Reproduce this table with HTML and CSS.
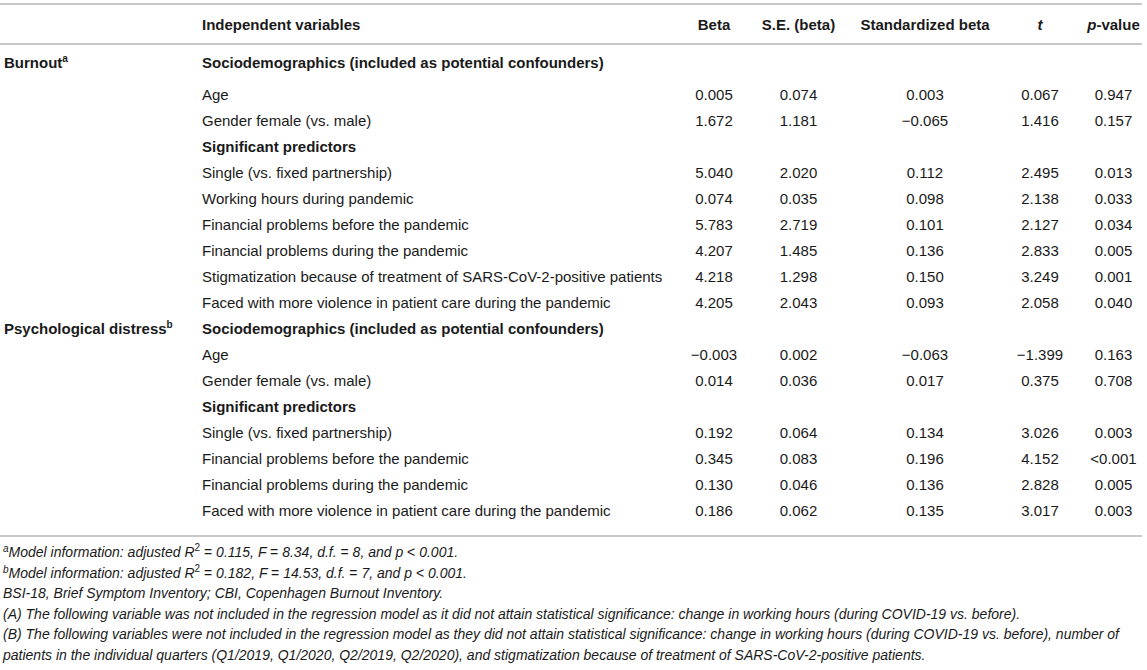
FILE: index.html
```html
<!DOCTYPE html>
<html lang="en">
<head>
<meta charset="utf-8">
<title>Regression table</title>
<link rel="stylesheet" href="styles.css">
</head>
<body>
<div class="page">
<table class="reg">
  <colgroup>
    <col class="c-out"><col class="c-var"><col class="c-beta"><col class="c-se"><col class="c-std"><col class="c-t"><col class="c-p">
  </colgroup>
  <thead>
    <tr>
      <th class="lft"></th>
      <th class="lft">Independent variables</th>
      <th>Beta</th>
      <th>S.E. (beta)</th>
      <th>Standardized beta</th>
      <th><i>t</i></th>
      <th><i>p</i>-value</th>
    </tr>
  </thead>
  <tbody>
    <tr class="first">
      <td class="lft outcome">Burnout<sup>a</sup></td>
      <td class="lft grp">Sociodemographics (included as potential confounders)</td>
      <td></td><td></td><td></td><td></td><td></td>
    </tr>
    <tr><td></td><td class="lft">Age</td><td>0.005</td><td>0.074</td><td>0.003</td><td>0.067</td><td>0.947</td></tr>
    <tr><td></td><td class="lft">Gender female (vs. male)</td><td>1.672</td><td>1.181</td><td>−0.065</td><td>1.416</td><td>0.157</td></tr>
    <tr><td></td><td class="lft grp">Significant predictors</td><td></td><td></td><td></td><td></td><td></td></tr>
    <tr><td></td><td class="lft">Single (vs. fixed partnership)</td><td>5.040</td><td>2.020</td><td>0.112</td><td>2.495</td><td>0.013</td></tr>
    <tr><td></td><td class="lft">Working hours during pandemic</td><td>0.074</td><td>0.035</td><td>0.098</td><td>2.138</td><td>0.033</td></tr>
    <tr><td></td><td class="lft">Financial problems before the pandemic</td><td>5.783</td><td>2.719</td><td>0.101</td><td>2.127</td><td>0.034</td></tr>
    <tr><td></td><td class="lft">Financial problems during the pandemic</td><td>4.207</td><td>1.485</td><td>0.136</td><td>2.833</td><td>0.005</td></tr>
    <tr><td></td><td class="lft">Stigmatization because of treatment of SARS-CoV-2-positive patients</td><td>4.218</td><td>1.298</td><td>0.150</td><td>3.249</td><td>0.001</td></tr>
    <tr><td></td><td class="lft">Faced with more violence in patient care during the pandemic</td><td>4.205</td><td>2.043</td><td>0.093</td><td>2.058</td><td>0.040</td></tr>
    <tr>
      <td class="lft outcome">Psychological distress<sup>b</sup></td>
      <td class="lft grp">Sociodemographics (included as potential confounders)</td>
      <td></td><td></td><td></td><td></td><td></td>
    </tr>
    <tr><td></td><td class="lft">Age</td><td>−0.003</td><td>0.002</td><td>−0.063</td><td>−1.399</td><td>0.163</td></tr>
    <tr><td></td><td class="lft">Gender female (vs. male)</td><td>0.014</td><td>0.036</td><td>0.017</td><td>0.375</td><td>0.708</td></tr>
    <tr><td></td><td class="lft grp">Significant predictors</td><td></td><td></td><td></td><td></td><td></td></tr>
    <tr><td></td><td class="lft">Single (vs. fixed partnership)</td><td>0.192</td><td>0.064</td><td>0.134</td><td>3.026</td><td>0.003</td></tr>
    <tr><td></td><td class="lft">Financial problems before the pandemic</td><td>0.345</td><td>0.083</td><td>0.196</td><td>4.152</td><td>&lt;0.001</td></tr>
    <tr><td></td><td class="lft">Financial problems during the pandemic</td><td>0.130</td><td>0.046</td><td>0.136</td><td>2.828</td><td>0.005</td></tr>
    <tr class="last"><td></td><td class="lft">Faced with more violence in patient care during the pandemic</td><td>0.186</td><td>0.062</td><td>0.135</td><td>3.017</td><td>0.003</td></tr>
  </tbody>
</table>
<div class="notes">
  <p><sup class="fn">a</sup>Model information: adjusted <i>R</i><sup class="sq">2</sup> <span class="up">=</span> 0.115, <i>F</i> <span class="up">=</span> 8.34, d.f. <span class="up">=</span> 8, and <i>p</i> <span class="up">&lt;</span> 0.001.</p>
  <p><sup class="fn">b</sup>Model information: adjusted <i>R</i><sup class="sq">2</sup> <span class="up">=</span> 0.182, <i>F</i> <span class="up">=</span> 14.53, d.f. <span class="up">=</span> 7, and <i>p</i> <span class="up">&lt;</span> 0.001.</p>
  <p>BSI-18, Brief Symptom Inventory; CBI, Copenhagen Burnout Inventory.</p>
  <p>(A) The following variable was not included in the regression model as it did not attain statistical significance: change in working hours (during COVID-19 vs. before).</p>
  <p>(B) The following variables were not included in the regression model as they did not attain statistical significance: change in working hours (during COVID-19 vs. before), number of patients in the individual quarters (Q1/2019, Q1/2020, Q2/2019, Q2/2020), and stigmatization because of treatment of SARS-CoV-2-positive patients.</p>
</div>
</div>
</body>
</html>
```
FILE: styles.css
```css
html, body {
  margin: 0;
  padding: 0;
  background: #ffffff;
}

.page {
  padding-top: 3px;
  width: 1147px;
  font-family: "Liberation Sans", Arial, Helvetica, sans-serif;
  color: #1a1a1a;
}

.reg {
  border-collapse: collapse;
  table-layout: fixed;
  width: 1142px;
  font-size: 15px;
}

.c-out { width: 198px; }
.c-var { width: 488px; }
.c-beta { width: 56px; }
.c-se { width: 113px; }
.c-std { width: 140px; }
.c-t { width: 90px; }
.c-p { width: 57px; }

.reg th {
  height: 38px;
  padding: 0;
  font-weight: bold;
  text-align: center;
  white-space: nowrap;
  border-top: 2px solid #c8c8c8;
  border-bottom: 2px solid #c8c8c8;
}

.reg td {
  height: 26px;
  padding: 0;
  text-align: center;
  white-space: nowrap;
  vertical-align: middle;
}

.reg .lft {
  text-align: left;
  padding-left: 4px;
}

.reg .first td {
  padding-top: 4px;
  padding-bottom: 6px;
}

.reg .last td {
  padding-bottom: 12px;
  border-bottom: 2px solid #c8c8c8;
}

.grp, .outcome {
  font-weight: bold;
}

.outcome sup {
  font-size: 10px;
  vertical-align: 6px;
  line-height: 0;
}

.notes {
  padding: 5px 0 0 3px;
  font-size: 14px;
  font-style: italic;
  line-height: 20.5px;
}

.notes p {
  margin: 0;
}

.notes .fn {
  font-size: 10px;
  vertical-align: 5px;
  line-height: 0;
}

.notes .sq {
  font-style: normal;
  font-size: 10px;
  vertical-align: 6px;
  line-height: 0;
}

.notes .up {
  font-style: normal;
}
```
